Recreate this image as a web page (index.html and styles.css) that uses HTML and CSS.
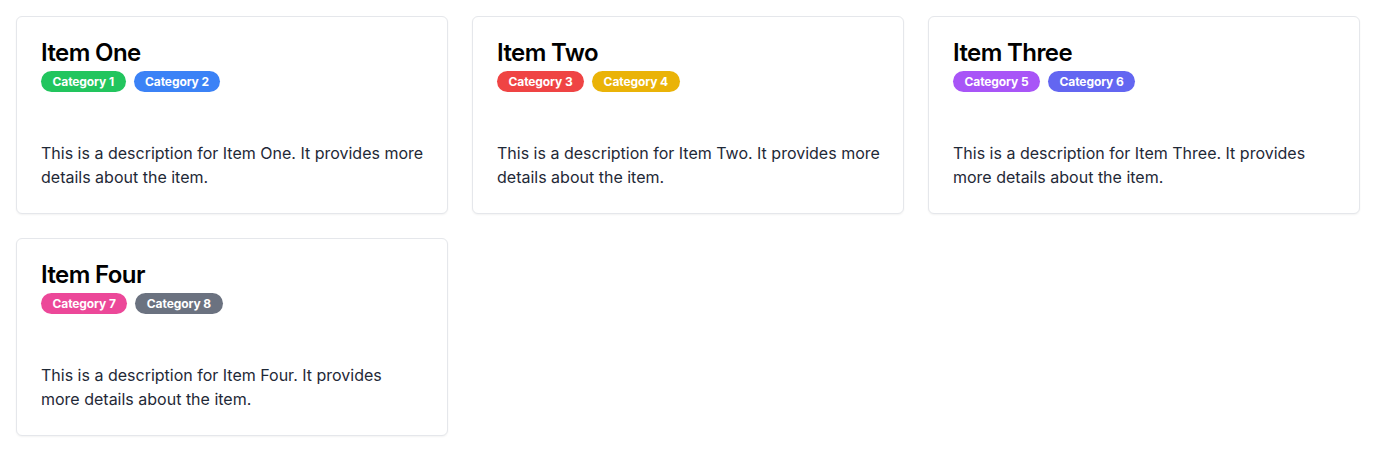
FILE: index.html
```html
<!DOCTYPE html>
<html lang="en">
<head>
<meta charset="utf-8">
<title>Items</title>
<link rel="stylesheet" href="styles.css">
</head>
<body>
<div class="grid">
  <div class="card">
    <h2 class="title">Item One</h2>
    <div class="badges">
      <span class="badge green">Category 1</span>
      <span class="badge blue">Category 2</span>
    </div>
    <p class="desc">This is a description for Item One. It provides more details about the item.</p>
  </div>
  <div class="card">
    <h2 class="title">Item Two</h2>
    <div class="badges">
      <span class="badge red">Category 3</span>
      <span class="badge yellow">Category 4</span>
    </div>
    <p class="desc">This is a description for Item Two. It provides more details about the item.</p>
  </div>
  <div class="card">
    <h2 class="title">Item Three</h2>
    <div class="badges">
      <span class="badge purple">Category 5</span>
      <span class="badge indigo">Category 6</span>
    </div>
    <p class="desc">This is a description for Item Three. It provides more details about the item.</p>
  </div>
  <div class="card">
    <h2 class="title">Item Four</h2>
    <div class="badges">
      <span class="badge pink">Category 7</span>
      <span class="badge gray">Category 8</span>
    </div>
    <p class="desc">This is a description for Item Four. It provides more details about the item.</p>
  </div>
</div>
</body>
</html>
```
FILE: styles.css
```css
* { box-sizing: border-box; }
body {
  margin: 0;
  background: #ffffff;
  font-family: Inter, "Noto Sans", sans-serif;
  color: #1f2937;
}
.grid {
  display: grid;
  grid-template-columns: repeat(3, 1fr);
  gap: 24px;
  padding: 16px;
}
.card {
  border: 1px solid #e5e7eb;
  border-radius: 6px;
  padding: 24px 23px 24px 24px;
  background: #fff;
  box-shadow: 0 1px 2px rgba(0,0,0,0.05);
}
.title {
  margin: 0;
  font-size: 24px;
  line-height: 24px;
  font-weight: 600;
  letter-spacing: -0.6px;
  color: #000000;
}
.badges {
  display: flex;
  gap: 8px;
  margin-top: 6px;
}
.badge {
  display: inline-block;
  padding: 2px 11.5px;
  border-radius: 9999px;
  font-size: 12px;
  line-height: 17px;
  font-weight: 700;
  letter-spacing: -0.1px;
  color: #fff;
}
.green { background: #22c55e; }
.blue { background: #3b82f6; }
.red { background: #ef4444; }
.yellow { background: #eab308; }
.purple { background: #a855f7; }
.indigo { background: #6366f1; }
.pink { background: #ec4899; }
.gray { background: #6b7280; }
.desc {
  margin: 49px 0 0 0;
  font-size: 16px;
  line-height: 24px;
  color: #1f2937;
}
```
